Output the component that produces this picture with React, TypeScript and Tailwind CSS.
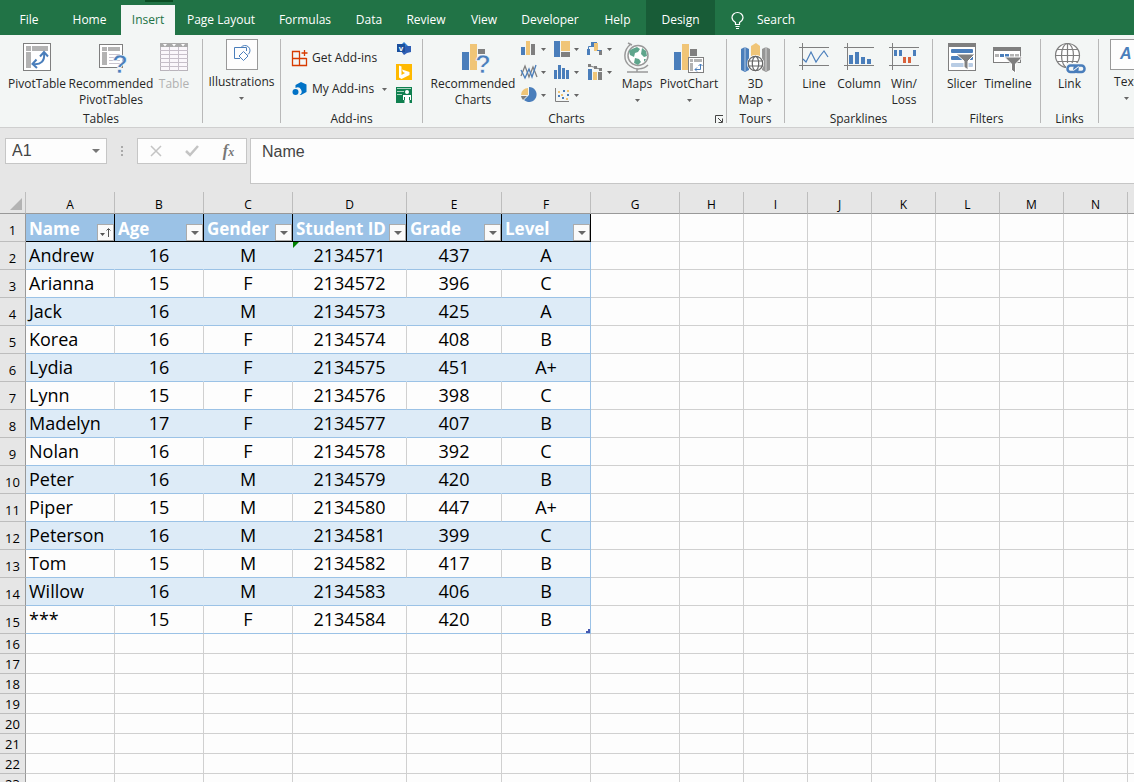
import React, { useState } from 'react';

const BLUE = '#4a7ebb';
const GOLD = '#f0c577';
const GRAY = '#7f7f7f';
const SILVER = '#b3b3b3';

interface IconProps {
  w?: number;
  h?: number;
  children: React.ReactNode;
}

const Icon: React.FC<IconProps> = ({ w = 28, h = 28, children }) => (
  <svg width={w} height={h} viewBox={`0 0 ${w} ${h}`} fill="none" className="shrink-0 overflow-visible" aria-hidden="true">
    {children}
  </svg>
);

const Caret: React.FC = () => (
  <svg width="5" height="3" viewBox="0 0 5 3" className="shrink-0" aria-hidden="true">
    <path d="M0 0h5L2.5 3z" fill="#666" />
  </svg>
);

const PivotTableIcon = () => (
  <Icon>
    <rect x="0.5" y="0.5" width="27" height="27" fill="#fff" stroke={GRAY} />
    <path d="M3 3h5v5H3zM9 3h16v5H9zM3 9h5v16H3z" fill={SILVER} />
    <path d="M10 21c8 1 12-3 11-11" stroke={BLUE} strokeWidth="2" />
    <path d="M13.5 16.5L9.5 21l4.5 4M17 13.5l4-4.5 4 4.5" stroke={BLUE} strokeWidth="2" />
  </Icon>
);

const RecommendedPivotIcon = () => (
  <Icon w={32} h={30}>
    <rect x="4.5" y="1.5" width="23" height="23" fill="#fff" stroke={GRAY} />
    <path d="M7 4h5v4H7zM13 4h12v4H13zM7 9h5v13H7z" fill={SILVER} />
    <path d="M14 11.5h11M14 14.5h11M14 17.5h11M14 20.5h11" stroke="#c9c4cf" />
    <text x="17" y="30" fontFamily="Liberation Sans, sans-serif" fontWeight="700" fontSize="26" fill={BLUE} stroke="#fff" strokeWidth="0.6">?</text>
  </Icon>
);

const TableIcon = () => (
  <Icon>
    <rect x="0.5" y="0.5" width="27" height="27" fill="#faf7fb" stroke="#b9b4bb" />
    <path d="M0 0h28v4H0z" fill="#aaa" />
    <path d="M3 1h4L5 3.5zM12 1h4l-2 2.5zM21 1h4l-2 2.5z" fill="#fff" />
    <path d="M0 7.5h28M0 11.5h28M0 15.5h28M0 19.5h28M0 23.5h28M9.5 4v24M18.5 4v24" stroke="#c6bfc9" />
  </Icon>
);

const ShapesIcon = () => (
  <Icon w={32} h={31}>
    <rect x="0.5" y="0.5" width="31" height="30" fill="#fdfdfd" stroke="#999" />
    <path d="M14 19.5H8.500v-11h12V12" stroke={BLUE} />
    <path d="M15 8.5a5 5 0 1 1 7 7" stroke={BLUE} />
    <path d="M17.5 12.5l4.5 4.5-4.500 4.500-4.500-4.500z" fill="#fff" stroke={BLUE} />
  </Icon>
);

const GetAddinsIcon = () => (
  <Icon w={16} h={16}>
    <path d="M8 1.5H.5v14h14V8M.5 8.500h14M7.500 1.500v14M12.500 0v6M9.500 3h6" stroke="#d83b01" strokeWidth="1.300" />
  </Icon>
);

const MyAddinsIcon = () => (
  <Icon w={16} h={16}>
    <path d="M9 1l5.500 2.500v7.500L9 14H7.500A4 4 0 0 0 3.500 7V4z" fill="#0072c6" />
    <circle cx="3.500" cy="11" r="3" fill="#0072c6" />
  </Icon>
);

const VisioIcon = () => (
  <Icon w={16} h={16}>
    <path d="M8 1l5 5-5 7-5-7z" fill="#2b7cd3" />
    <path d="M10 5h5v6l-4 1-3 2-3-4z" fill="#2f5fb5" />
    <rect x="1" y="3" width="8" height="8" fill="#1b4f9c" />
    <text x="5" y="9.500" textAnchor="middle" fontFamily="Liberation Sans, sans-serif" fontWeight="700" fontSize="8" fill="#fff">v</text>
  </Icon>
);

const BingIcon = () => (
  <Icon w={16} h={16}>
    <rect width="16" height="16" fill="#ffb900" />
    <path d="M3 1.500l2.500 1v8.500l3.500-2-2-1L6 5.500l7.500 2.500v3L5.500 15 3 13.500z" fill="#fff" />
  </Icon>
);

const PeopleGraphIcon = () => (
  <Icon w={16} h={16}>
    <rect width="16" height="16" fill="#0f8050" />
    <path d="M1 1.500h14M1 4.500h7M1 7.500h5" stroke="#a9d5bf" />
    <circle cx="11" cy="5" r="2" fill="#fff" />
    <path d="M7 8h8v5h-1.500v3h-5v-3H7z" fill="#fff" />
    <path d="M8.500 10v3M13.500 10v3" stroke="#0f8050" />
  </Icon>
);

const RecommendedChartsIcon = () => (
  <Icon w={32} h={30}>
    <path d="M5 9h7v18H5z" fill={BLUE} />
    <path d="M13 1h7v26h-7z" fill={GOLD} />
    <path d="M21 6h7v5h-7z" fill={GRAY} />
    <text x="18" y="30" fontFamily="Liberation Sans, sans-serif" fontWeight="700" fontSize="26" fill={BLUE} stroke="#fff" strokeWidth="0.600">?</text>
  </Icon>
);

const MapsIcon = () => (
  <Icon w={26} h={31}>
    <circle cx="14" cy="12.500" r="10" fill="#fff" stroke="#999" strokeWidth="1.500" />
    <path d="M8 6l5-2 3 2-2 3-3 1-1 4-4-2-1-4zM18 5l4 3 1 5-3 1-3-3zM11 15l4 1 2 3-3 3-4-2zM20 16h2l-2 3z" fill="#5fa58c" />
    <path d="M7 1C-1 7-1 18 6 23c5 4 13 4 18-1M4 0l4 2M13 26v3M3 29h21" stroke="#999" strokeWidth="1.500" />
  </Icon>
);

const PivotChartIcon = () => (
  <Icon w={30} h={30}>
    <path d="M0 9h7v18H0z" fill={BLUE} />
    <path d="M8 1h7v26H8z" fill={GOLD} />
    <path d="M16 6h7v7h-7z" fill={GRAY} />
    <rect x="14.500" y="14.500" width="15" height="15" fill="#fff" stroke={GRAY} />
    <path d="M16 16h3v3h-3zM20 16h8v3h-8zM16 20h3v8h-3z" fill={SILVER} />
    <path d="M21 26.500h5.500V21M23 24.500l-2 2 2 2M24.500 23l2-2 2 2" stroke={BLUE} />
  </Icon>
);

const Map3DIcon = () => (
  <Icon w={30} h={29}>
    <path d="M0 6l4-2 4 2v21l-4 2-4-2z" fill={BLUE} />
    <path d="M10 3l5-3 4 3v10h-9z" fill={GOLD} />
    <path d="M21 6l4-2 4 2v21l-4 2-4-2z" fill="#969696" />
    <path d="M4 4v24M25 4v24" stroke="#fff" strokeOpacity="0.600" />
    <circle cx="14.500" cy="20.500" r="8.500" fill="#fff" />
    <circle cx="14.500" cy="20.500" r="7.200" stroke="#666" strokeWidth="1.300" />
    <ellipse cx="14.500" cy="20.500" rx="3.200" ry="7.200" stroke="#666" strokeWidth="1.200" />
    <path d="M7.500 18h14M7.500 23h14" stroke="#666" strokeWidth="1.200" />
  </Icon>
);

const SparkFrame: React.FC<{ children: React.ReactNode }> = ({ children }) => (
  <Icon w={30} h={28}>
    <path d="M0 4.500h30M0 22.500h30M3.500 0v27" stroke={GRAY} />
    {children}
  </Icon>
);

const SparkLineIcon = () => (
  <SparkFrame>
    <path d="M4 16l3 3 5-10 5 10 4-6 4-5 4 6" stroke={BLUE} strokeWidth="1.200" />
  </SparkFrame>
);

const SparkColumnIcon = () => (
  <SparkFrame>
    <path d="M5 12h4v9H5zM11 9h4v12h-4zM17 14h4v7h-4zM23 16h4v5h-4z" fill={BLUE} />
  </SparkFrame>
);

const WinLossIcon = () => (
  <SparkFrame>
    <path d="M5 7h3v6H5zM10 7h3v6h-3zM24 7h3v6h-3z" fill={BLUE} />
    <path d="M14 14h3v6h-3zM19 14h3v6h-3z" fill="#d9623b" />
  </SparkFrame>
);

const SlicerIcon = () => (
  <Icon>
    <rect x="0.500" y="0.500" width="27" height="27" fill="#fff" stroke={GRAY} />
    <path d="M0 0h28v4H0z" fill={GRAY} />
    <rect x="3" y="6" width="22" height="4" rx="1" fill={BLUE} />
    <rect x="3" y="13" width="22" height="4" rx="1" fill={BLUE} />
    <rect x="3" y="20" width="22" height="4" rx="1" fill="#b8cce4" />
    <path d="M8 11h19l-7 7v9l-4-3v-6z" fill={GRAY} stroke="#fff" />
  </Icon>
);

const TimelineIcon = () => (
  <Icon w={30} h={30}>
    <rect x="0.500" y="4.500" width="27" height="15" fill="#fff" stroke={GRAY} />
    <path d="M0 4h28v4H0z" fill={GRAY} />
    <path d="M2 11h4v3H2zM17 11h4v3h-4zM22 11h4v3h-4z" fill={SILVER} />
    <path d="M7 11h4v3H7zM12 11h4v3h-4z" fill={BLUE} />
    <path d="M11.500 14h18l-7 7v9l-4-3v-6z" fill={GRAY} stroke="#fff" />
  </Icon>
);

const LinkIcon = () => (
  <Icon w={30} h={31}>
    <g stroke={GRAY} strokeWidth="1.200">
      <circle cx="12.500" cy="12.500" r="12" fill="#fff" />
      <ellipse cx="12.500" cy="12.500" rx="6" ry="12" />
      <path d="M12.500 0v25M0.500 12.500h24M2 6.500h21M2 18.500h21" />
    </g>
    <path d="M11 20h20v11H11z" fill="#f3f6f5" />
    <rect x="12.500" y="22.500" width="10" height="6.500" rx="3" stroke={BLUE} strokeWidth="2.500" />
    <rect x="19.500" y="22.500" width="10" height="6.500" rx="3" stroke={BLUE} strokeWidth="2.500" />
    <path d="M18.500 27.500l5-4" stroke="#fff" />
  </Icon>
);

const TextIcon = () => (
  <Icon w={32} h={31}>
    <rect x="0.500" y="0.500" width="31" height="30" fill="#fdfdfd" stroke="#999" />
    <text x="10" y="20" fontFamily="Liberation Sans, sans-serif" fontStyle="italic" fontWeight="700" fontSize="16" fill={BLUE}>A</text>
  </Icon>
);

const chartTypes = [
  {
    name: 'Column chart',
    art: (
      <>
        <path d="M0 6h4v8H0z" fill={BLUE} />
        <path d="M5 0h4v14H5z" fill={GOLD} />
        <path d="M10 3h4v11h-4z" fill={GRAY} />
      </>
    ),
  },
  {
    name: 'Hierarchy chart',
    art: (
      <>
        <path d="M0 0h6v16H0z" fill={BLUE} />
        <path d="M7 0h9v10H7z" fill={GOLD} />
        <path d="M7 11h9v5H7z" fill={GRAY} />
      </>
    ),
  },
  {
    name: 'Waterfall chart',
    art: (
      <>
        <path d="M0 8h3v6H0zM4 1h4v5H4z" fill={BLUE} />
        <path d="M7 2h4v8H7z" fill={GOLD} />
        <path d="M12 9h3v5h-3z" fill={GRAY} />
        <path d="M1.500 8V5.500H5M4 1.500h6M10 9.500h4" stroke={BLUE} />
      </>
    ),
  },
  {
    name: 'Line chart',
    art: (
      <>
        <path d="M0 12l4-10 4 11 4-10 4 10" stroke={GRAY} strokeWidth="1.300" />
        <path d="M0 6l4 8 4-9 3 8 4-12" stroke={BLUE} strokeWidth="1.300" />
      </>
    ),
  },
  {
    name: 'Statistic chart',
    art: <path d="M0 6h3v9H0zM4 1h3v14H4zM8 4h3v11H8zM12 6h3v9h-3z" fill={BLUE} />,
  },
  {
    name: 'Combo chart',
    art: (
      <>
        <path d="M1 5h4v11H1z" fill={BLUE} />
        <path d="M6 8h4v8H6z" fill={GOLD} />
        <path d="M11 8h4v8h-4z" fill={GRAY} />
        <path d="M2 1.500l6 2 6 2" stroke={GRAY} />
        <path d="M1 0h3v3H1zM7 2h3v3H7zM12 4h3v3h-3z" fill={GRAY} />
      </>
    ),
  },
  {
    name: 'Pie chart',
    art: (
      <>
        <path d="M8 8V0a7.500 7.500 0 1 1-5 13z" fill={BLUE} />
        <path d="M7 8H0a7 7 0 0 1 7-7z" fill={GOLD} />
        <path d="M6 9H0a7 7 0 0 0 2 4z" fill={GRAY} />
      </>
    ),
  },
  {
    name: 'Scatter chart',
    art: (
      <>
        <path d="M1.500 1v13.500H15" stroke={GRAY} />
        <path d="M4 8h2v2H4zM9 3h2v2H9zM13 7h2v2h-2zM8 10h2v2H8z" fill={BLUE} />
        <path d="M4 4h2v2H4zM7 7h2v2H7zM13 3h2v2h-2zM12 11h2v2h-2z" fill={GOLD} />
      </>
    ),
  },
];

const tabs = [
  { label: 'File', width: 'w-[58px]' },
  { label: 'Home', width: 'w-[63px]' },
  { label: 'Insert', width: 'w-[54px]' },
  { label: 'Page Layout', width: 'w-[92px]' },
  { label: 'Formulas', width: 'w-[76px]' },
  { label: 'Data', width: 'w-[52px]' },
  { label: 'Review', width: 'w-[62px]' },
  { label: 'View', width: 'w-[54px]' },
  { label: 'Developer', width: 'w-[78px]' },
  { label: 'Help', width: 'w-[57px]' },
  { label: 'Design', width: 'w-[69px]' },
];

const TabBar: React.FC = () => {
  const [active, setActive] = useState('Insert');

  const tabStyle = (label: string) => {
    if (label === active) return 'h-[30px] bg-[#f3f6f5] text-[#217346]';
    if (label === 'Design') return 'h-[35px] pt-[5px] bg-[#185c37] text-white';
    return 'h-[35px] pt-[5px] text-white';
  };

  return (
    <nav className="relative flex h-[35px] items-end overflow-hidden bg-[#217346] text-xs">
      <span className="absolute left-[145px] top-0 h-0.5 w-7 bg-[#0b4d24]" />
      {tabs.map((tab) => (
        <button
          key={tab.label}
          type="button"
          onClick={() => setActive(tab.label)}
          className={`flex shrink-0 items-center justify-center whitespace-nowrap ${tab.width} ${tabStyle(tab.label)}`}
        >
          {tab.label}
        </button>
      ))}
      <button type="button" className="flex h-[35px] items-center gap-3 pl-4 pt-[5px] text-white">
        <Icon w={14} h={17}>
          <path d="M4.500 12.500v-2C2 9 1 7.500 1 5.500a5.500 5 0 0 1 11 0c0 2-1 3.500-3.500 5v2zM4.500 14.500h4M5 16.500h3" stroke="#fff" strokeWidth="1.200" />
        </Icon>
        Search
      </button>
    </nav>
  );
};

interface BigButtonProps {
  width: string;
  icon: React.ReactNode;
  label: string;
  second?: string;
  caret?: 'below' | 'inline';
  framed?: boolean;
  disabled?: boolean;
}

const BigButton: React.FC<BigButtonProps> = ({ width, icon, label, second, caret, framed, disabled }) => (
  <button
    type="button"
    disabled={disabled}
    className={`flex shrink-0 flex-col items-center whitespace-nowrap leading-4 disabled:text-[#b1b1b1] ${width}`}
  >
    <span className={`flex items-start justify-center ${framed ? 'h-[35px]' : 'h-[37px] pt-1'}`}>{icon}</span>
    <span>{label}</span>
    {second && (
      <span className="flex items-center gap-1">
        {second}
        {caret === 'inline' && <Caret />}
      </span>
    )}
    {caret === 'below' && (
      <span className="flex h-4 items-center">
        <Caret />
      </span>
    )}
  </button>
);

interface GroupProps {
  label?: string;
  width: string;
  pad?: string;
  launcher?: boolean;
  children: React.ReactNode;
}

const Group: React.FC<GroupProps> = ({ label, width, pad = '', launcher, children }) => (
  <section className={`relative flex shrink-0 flex-col border-r border-[#b8b8b8] ${width}`}>
    <div className={`flex h-[76px] items-start ${pad}`}>{children}</div>
    <h2 className={`text-center leading-2 ${launcher ? 'pr-4' : ''}`}>{label}</h2>
    {launcher && (
      <button type="button" aria-label={`${label} options`} className="absolute bottom-0 right-[3px]">
        <Icon w={8} h={8}>
          <path d="M0.500 8V0.500H8M3 3l4 4M7.500 3.500v4h-4" stroke="#444" />
        </Icon>
      </button>
    )}
  </section>
);

const Ribbon: React.FC = () => (
  <div className="flex h-[93px] overflow-hidden border-b border-[#cfcfcf] bg-[#f3f6f5] pb-1 pt-1 text-xs text-[#262626]">
    <Group label="Tables" width="w-[203px]" pad="pl-1.5">
      <BigButton width="w-[62px]" icon={<PivotTableIcon />} label="PivotTable" />
      <BigButton width="w-[86px]" icon={<RecommendedPivotIcon />} label="Recommended" second="PivotTables" />
      <BigButton width="w-10" icon={<TableIcon />} label="Table" disabled />
    </Group>
    <Group width="w-[78px]">
      <BigButton width="w-full" icon={<ShapesIcon />} label="Illustrations" caret="below" framed />
    </Group>
    <Group label="Add-ins" width="w-[142px]" pad="pl-[11px]">
      <div className="flex w-[104px] flex-col items-start gap-[15px] pt-[11px] leading-4">
        <button type="button" className="flex items-center gap-1 whitespace-nowrap">
          <GetAddinsIcon />
          Get Add-ins
        </button>
        <button type="button" className="flex w-24 items-center gap-1 whitespace-nowrap">
          <MyAddinsIcon />
          My Add-ins
          <span className="ml-1">
            <Caret />
          </span>
        </button>
      </div>
      <div className="flex flex-col gap-[7px] pt-0.5">
        <button type="button" aria-label="Visio Data Visualizer"><VisioIcon /></button>
        <button type="button" aria-label="Bing Maps"><BingIcon /></button>
        <button type="button" aria-label="People Graph"><PeopleGraphIcon /></button>
      </div>
    </Group>
    <Group label="Charts" width="w-[304px]" pad="pl-2" launcher>
      <BigButton width="w-[84px]" icon={<RecommendedChartsIcon />} label="Recommended" second="Charts" />
      <div className="grid w-[102px] shrink-0 grid-cols-[33px_33px_33px] gap-y-[7px] pl-1.5 pt-0.5">
        {chartTypes.map((chart) => (
          <button key={chart.name} type="button" aria-label={chart.name} className="flex h-4 items-center gap-1">
            <Icon w={16} h={16}>{chart.art}</Icon>
            <Caret />
          </button>
        ))}
      </div>
      <BigButton width="w-10" icon={<MapsIcon />} label="Maps" caret="below" />
      <BigButton width="w-16" icon={<PivotChartIcon />} label="PivotChart" caret="below" />
    </Group>
    <Group label="Tours" width="w-[58px]">
      <BigButton width="w-full" icon={<Map3DIcon />} label="3D" second="Map" caret="inline" />
    </Group>
    <Group label="Sparklines" width="w-[148px]" pad="pl-2">
      <BigButton width="w-[42px]" icon={<SparkLineIcon />} label="Line" />
      <BigButton width="w-12" icon={<SparkColumnIcon />} label="Column" />
      <BigButton width="w-[42px]" icon={<WinLossIcon />} label="Win/" second="Loss" />
    </Group>
    <Group label="Filters" width="w-[108px]" pad="pl-2">
      <BigButton width="w-[42px]" icon={<SlicerIcon />} label="Slicer" />
      <BigButton width="w-[50px]" icon={<TimelineIcon />} label="Timeline" />
    </Group>
    <Group label="Links" width="w-[58px]">
      <BigButton width="w-full" icon={<LinkIcon />} label="Link" />
    </Group>
    <Group width="w-[60px]">
      <BigButton width="w-[54px]" icon={<TextIcon />} label="Text" caret="below" framed />
    </Group>
  </div>
);

const FormulaBar: React.FC = () => {
  const [cell, setCell] = useState('A1');
  const [formula, setFormula] = useState('Name');

  return (
    <div className="flex items-start bg-[#e6e6e6] pb-2 pl-[5px] pt-2.5 font-['Liberation_Sans',sans-serif] text-base text-[#444]">
      <div className="flex h-[26px] w-[102px] items-center border border-[#c6c6c6] bg-[#fdfdfd] pr-1.5">
        <input
          aria-label="Name box"
          value={cell}
          onChange={(e) => setCell(e.target.value)}
          className="min-w-0 flex-1 pl-1.5 leading-5 outline-none"
        />
        <button type="button" aria-label="Choose a name">
          <svg width="8" height="4" viewBox="0 0 8 4" aria-hidden="true">
            <path d="M0 0h8L4 4z" fill="#777" />
          </svg>
        </button>
      </div>
      <div className="flex h-[26px] w-[30px] items-center justify-center">
        <Icon w={2} h={10}>
          <path d="M0 0h2v2H0zM0 4h2v2H0zM0 8h2v2H0z" fill="#aaa" />
        </Icon>
      </div>
      <div className="flex h-[26px] w-[110px] items-center justify-around border border-[#c6c6c6] bg-[#fdfdfd]">
        <button type="button" aria-label="Cancel">
          <Icon w={12} h={12}>
            <path d="M1 1l10 10M11 1L1 11" stroke="#c4c4c4" strokeWidth="1.500" />
          </Icon>
        </button>
        <button type="button" aria-label="Enter">
          <Icon w={14} h={12}>
            <path d="M1 6l4 4 8-9" stroke="#c4c4c4" strokeWidth="2.500" />
          </Icon>
        </button>
        <button type="button" aria-label="Insert function" className="font-['Liberation_Serif',serif] text-base font-bold italic leading-5 text-[#777]">
          f<span className="text-xs">x</span>
        </button>
      </div>
      <textarea
        aria-label="Formula bar"
        value={formula}
        onChange={(e) => setFormula(e.target.value)}
        className="ml-[3px] h-[46px] min-w-0 flex-1 resize-none border border-r-0 border-[#c6c6c6] bg-[#fdfdfd] py-[3px] pl-[11px] leading-5 outline-none"
      />
    </div>
  );
};

const columns = [
  { letter: 'A', width: 'w-[89px]' },
  { letter: 'B', width: 'w-[89px]' },
  { letter: 'C', width: 'w-[89px]' },
  { letter: 'D', width: 'w-[114px]' },
  { letter: 'E', width: 'w-[95px]' },
  { letter: 'F', width: 'w-[89px]' },
  { letter: 'G', width: 'w-[89px]' },
  { letter: 'H', width: 'w-16' },
  { letter: 'I', width: 'w-16' },
  { letter: 'J', width: 'w-16' },
  { letter: 'K', width: 'w-16' },
  { letter: 'L', width: 'w-16' },
  { letter: 'M', width: 'w-16' },
  { letter: 'N', width: 'w-16' },
  { letter: 'O', width: 'w-16' },
];

const fields = ['Name', 'Age', 'Gender', 'Student ID', 'Grade', 'Level'];

const students = [
  ['Andrew', '16', 'M', '2134571', '437', 'A'],
  ['Arianna', '15', 'F', '2134572', '396', 'C'],
  ['Jack', '16', 'M', '2134573', '425', 'A'],
  ['Korea', '16', 'F', '2134574', '408', 'B'],
  ['Lydia', '16', 'F', '2134575', '451', 'A+'],
  ['Lynn', '15', 'F', '2134576', '398', 'C'],
  ['Madelyn', '17', 'F', '2134577', '407', 'B'],
  ['Nolan', '16', 'F', '2134578', '392', 'C'],
  ['Peter', '16', 'M', '2134579', '420', 'B'],
  ['Piper', '15', 'M', '2134580', '447', 'A+'],
  ['Peterson', '16', 'M', '2134581', '399', 'C'],
  ['Tom', '15', 'M', '2134582', '417', 'B'],
  ['Willow', '16', 'M', '2134583', '406', 'B'],
  ['***', '15', 'F', '2134584', '420', 'B'],
];

const emptyRows = [16, 17, 18, 19, 20, 21, 22, 23];

const RowHeader: React.FC<{ n: number; tall?: boolean }> = ({ n, tall }) => (
  <th
    scope="row"
    className={`border-b border-r border-b-[#bdbdbd] border-r-[#999] bg-[#e6e6e6] px-0 pt-0 align-bottom text-[13px] font-normal leading-[18px] ${tall ? 'pb-0.5' : 'pb-0'}`}
  >
    {n}
  </th>
);

const EmptyCells: React.FC<{ from: number }> = ({ from }) => (
  <>
    {columns.slice(from).map((col) => (
      <td key={col.letter} className="border-b border-r border-[#d0d0d0] p-0" />
    ))}
  </>
);

const FilterButton: React.FC<{ field: string; sorted: boolean }> = ({ field, sorted }) => (
  <button
    type="button"
    aria-label={`Filter ${field}`}
    className="flex size-[17px] shrink-0 items-center justify-center border border-[#ababab] bg-[#fafafa]"
  >
    {sorted ? (
      <Icon w={11} h={9}>
        <path d="M0 5h5L2.500 8zM8 1h1v8H8z" fill="#555" />
        <path d="M6.500 2.500l2-2 2 2" stroke="#555" />
      </Icon>
    ) : (
      <Icon w={8} h={4}>
        <path d="M0 0h8L4 4z" fill="#666" />
      </Icon>
    )}
  </button>
);

const Sheet: React.FC = () => (
  <table className="w-[1192px] table-fixed border-separate border-spacing-0 bg-[#fdfdfd] text-black">
    <colgroup>
      <col className="w-[26px]" />
      {columns.map((col) => (
        <col key={col.letter} className={col.width} />
      ))}
    </colgroup>
    <thead>
      <tr className="h-[22px] bg-[#e6e6e6] text-xs">
        <th className="border-b border-r border-b-[#999] border-r-[#bdbdbd] p-0 align-bottom">
          <button type="button" aria-label="Select all" className="block pb-[3px] pl-2.5">
            <svg width="12" height="12" viewBox="0 0 12 12" aria-hidden="true">
              <path d="M12 0v12H0z" fill="#b3b3b3" />
            </svg>
          </button>
        </th>
        {columns.map((col) => (
          <th key={col.letter} scope="col" className="border-b border-r border-b-[#999] border-r-[#bdbdbd] p-0 align-bottom font-normal leading-4">
            {col.letter}
          </th>
        ))}
      </tr>
    </thead>
    <tbody>
      <tr className="h-7">
        <RowHeader n={1} tall />
        {fields.map((field, i) => (
          <th key={field} scope="col" className="border-b border-r border-black bg-[#9bc2e6] p-0 align-bottom text-[17px] font-bold text-white">
            <div className="flex h-[27px] items-end justify-between whitespace-nowrap pl-[3px]">
              <span className="min-w-0 leading-[25px]">{field}</span>
              <FilterButton field={field} sorted={i === 0} />
            </div>
          </th>
        ))}
        <EmptyCells from={6} />
      </tr>
      {students.map((student, r) => {
        const banded = r % 2 === 0;
        return (
          <tr key={student[3]} className="h-7">
            <RowHeader n={r + 2} tall />
            {student.map((value, c) => {
              const edge = c === 5 ? 'border-r-[#9bc2e6]' : banded ? 'border-r-[#ddebf7]' : 'border-r-[#d0d0d0]';
              return (
                <td
                  key={fields[c]}
                  className={`relative border-b border-r border-b-[#9bc2e6] py-0 pr-0 text-lg leading-[27px] ${edge} ${banded ? 'bg-[#ddebf7]' : ''} ${c === 0 ? 'pl-[3px]' : 'pl-0 text-center'}`}
                >
                  {value}
                  {r === 0 && c === 3 && (
                    <svg width="6" height="6" viewBox="0 0 6 6" className="absolute left-0 top-0" aria-hidden="true">
                      <path d="M0 0h6L0 6z" fill="#008000" />
                    </svg>
                  )}
                  {r === students.length - 1 && c === 5 && (
                    <svg width="4" height="4" viewBox="0 0 4 4" className="absolute bottom-0 right-0" aria-hidden="true">
                      <path d="M2 0h2v4H0V2h2z" fill="#4558b0" />
                    </svg>
                  )}
                </td>
              );
            })}
            <EmptyCells from={6} />
          </tr>
        );
      })}
      {emptyRows.map((n) => (
        <tr key={n} className="h-5">
          <RowHeader n={n} />
          <EmptyCells from={0} />
        </tr>
      ))}
    </tbody>
  </table>
);

const App: React.FC = () => (
  <div className="h-screen overflow-hidden bg-[#fdfdfd] font-['Open_Sans',sans-serif]">
    <TabBar />
    <Ribbon />
    <FormulaBar />
    <Sheet />
  </div>
);

export default App;
